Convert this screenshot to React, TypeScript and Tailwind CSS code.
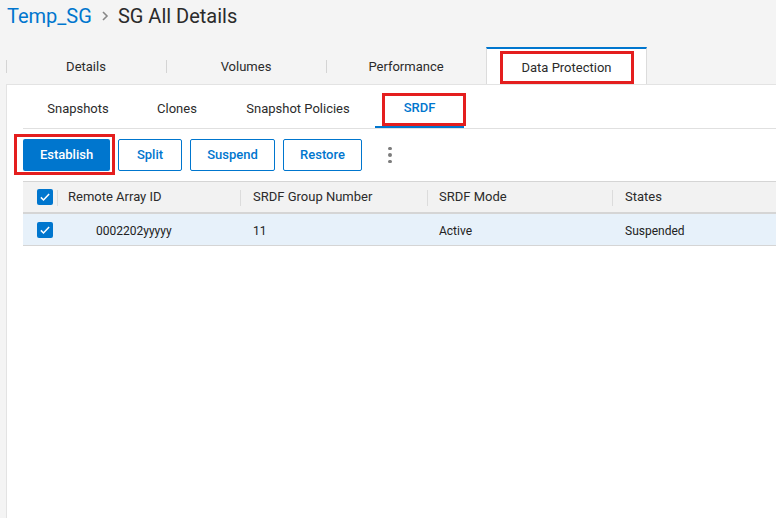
import React from "react";

const topTabs = ["Details", "Volumes", "Performance"];

const subTabs = [
  { label: "Snapshots", w: "w-[110px]" },
  { label: "Clones", w: "w-[88px]" },
  { label: "Snapshot Policies", w: "w-[154px]" },
];

const Checkbox: React.FC = () => (
  <span className="w-4 h-4 rounded-[2px] bg-[#0076ce] flex items-center justify-center">
    <svg viewBox="0 0 16 16" className="w-3 h-3" fill="none">
      <path d="M2.5 8.5l3.5 3.5 7.5-8" stroke="#fff" strokeWidth="2" />
    </svg>
  </span>
);

const OutlineButton: React.FC<{ label: string; w: string }> = ({ label, w }) => (
  <button
    className={`${w} h-8 border border-[#0076ce] rounded-[2px] bg-white text-[13px] font-medium text-[#0076ce]`}
  >
    {label}
  </button>
);

const App: React.FC = () => {
  return (
    <div
      className="w-[776px] h-[518px] bg-[#f4f4f4] overflow-hidden flex flex-col text-[#333]"
      style={{ fontFamily: "Roboto, 'Liberation Sans', sans-serif" }}
    >
      {/* Breadcrumb */}
      <div className="h-[48px] pl-[7px] pt-[2px] flex items-start text-[20px] leading-[28px]">
        <span className="text-[#0076ce]">Temp_SG</span>
        <svg viewBox="0 0 10 10" className="w-[10px] h-[10px] mx-[8px] mt-[9px]" fill="none">
          <path d="M3 1l4 4-4 4" stroke="#888" strokeWidth="1.6" />
        </svg>
        <span className="text-[#2b2b2b]">SG All Details</span>
      </div>

      {/* Top tabs */}
      <div className="h-[36px] ml-[6px] flex">
        {topTabs.map((t) => (
          <div key={t} className="w-[160px] h-full flex items-center relative">
            <span className="absolute left-0 top-[12px] h-[13px] w-px bg-[#d4d4d4]" />
            <span className="w-full text-center text-[13px] text-[#2b2b2b] mt-[1px]">{t}</span>
          </div>
        ))}
        <div className="w-[161px] h-[37px] -mt-[1px] bg-white border-t-2 border-[#0076ce] border-x border-x-[#dcdcdc] flex justify-center pt-[2px] z-10">
          <span className="w-[134px] h-[33px] border-[3px] border-[#e41e1e] flex items-center justify-center text-[13px] text-[#2b2b2b]">
            Data Protection
          </span>
        </div>
      </div>

      {/* Panel */}
      <div className="flex-1 ml-[6px] bg-white border-l border-t border-[#e3e3e3] pl-[16px] flex flex-col">
        {/* Sub tabs */}
        <div className="h-[44px] flex border-b border-[#e0e0e0]">
          {subTabs.map((t) => (
            <div key={t.label} className={`${t.w} h-full flex items-center justify-center pt-[5px] text-[13px] text-[#2b2b2b]`}>
              {t.label}
            </div>
          ))}
          <div className="w-[89px] h-full relative flex items-center justify-center pt-[5px] text-[13px] font-medium text-[#0076ce] border-b-2 border-[#0076ce]">
            SRDF
            <span className="absolute left-[7px] top-[8px] w-[84px] h-[33px] border-[3px] border-[#e41e1e]" />
          </div>
        </div>

        {/* Toolbar */}
        <div className="h-[52px] flex items-center">
          <div className="relative">
            <button className="w-[87px] h-8 rounded-[2px] bg-[#0076ce] text-white text-[13px] font-medium">
              Establish
            </button>
            <span className="absolute left-[-9px] top-[-5px] w-[101px] h-[41px] border-[3px] border-[#e41e1e]" />
          </div>
          <div className="ml-[8px]">
            <OutlineButton label="Split" w="w-[64px]" />
          </div>
          <div className="ml-[8px]">
            <OutlineButton label="Suspend" w="w-[85px]" />
          </div>
          <div className="ml-[8px]">
            <OutlineButton label="Restore" w="w-[79px]" />
          </div>
          <div className="ml-[26px] flex flex-col gap-[3px]">
            <span className="w-[3.5px] h-[3.5px] rounded-full bg-[#7c7c7c]" />
            <span className="w-[3.5px] h-[3.5px] rounded-full bg-[#7c7c7c]" />
            <span className="w-[3.5px] h-[3.5px] rounded-full bg-[#7c7c7c]" />
          </div>
        </div>

        {/* Table */}
        <div className="flex flex-col">
          <div className="h-[33px] flex items-center bg-[#f2f2f2] border-t border-b-2 border-[#d5d5d5] text-[13px] text-[#2b2b2b]">
            <div className="w-[34px] pl-[14px] flex items-center">
              <Checkbox />
            </div>
            <div className="w-[183px] h-full flex items-center relative pl-[11px]">
              <span className="absolute left-0 top-[8px] h-[16px] w-px bg-[#dcdcdc]" />
              Remote Array ID
            </div>
            <div className="w-[187px] h-full flex items-center relative pl-[13px]">
              <span className="absolute left-0 top-[8px] h-[16px] w-px bg-[#dcdcdc]" />
              SRDF Group Number
            </div>
            <div className="w-[185px] h-full flex items-center relative pl-[12px]">
              <span className="absolute left-0 top-[8px] h-[16px] w-px bg-[#dcdcdc]" />
              SRDF Mode
            </div>
            <div className="flex-1 h-full flex items-center relative pl-[13px]">
              <span className="absolute left-0 top-[8px] h-[16px] w-px bg-[#dcdcdc]" />
              States
            </div>
          </div>
          <div className="h-[32px] flex items-center bg-[#e7f1fa] border-b border-[#d5d5d5] text-[12px] text-[#222]">
            <div className="w-[34px] pl-[14px] flex items-center">
              <Checkbox />
            </div>
            <div className="w-[183px] pl-[39px] pt-[2px]">0002202yyyyy</div>
            <div className="w-[187px] pl-[13px] pt-[2px]">11</div>
            <div className="w-[185px] pl-[12px] pt-[2px]">Active</div>
            <div className="flex-1 pl-[13px] pt-[2px]">Suspended</div>
          </div>
        </div>
      </div>
    </div>
  );
};

export default App;
